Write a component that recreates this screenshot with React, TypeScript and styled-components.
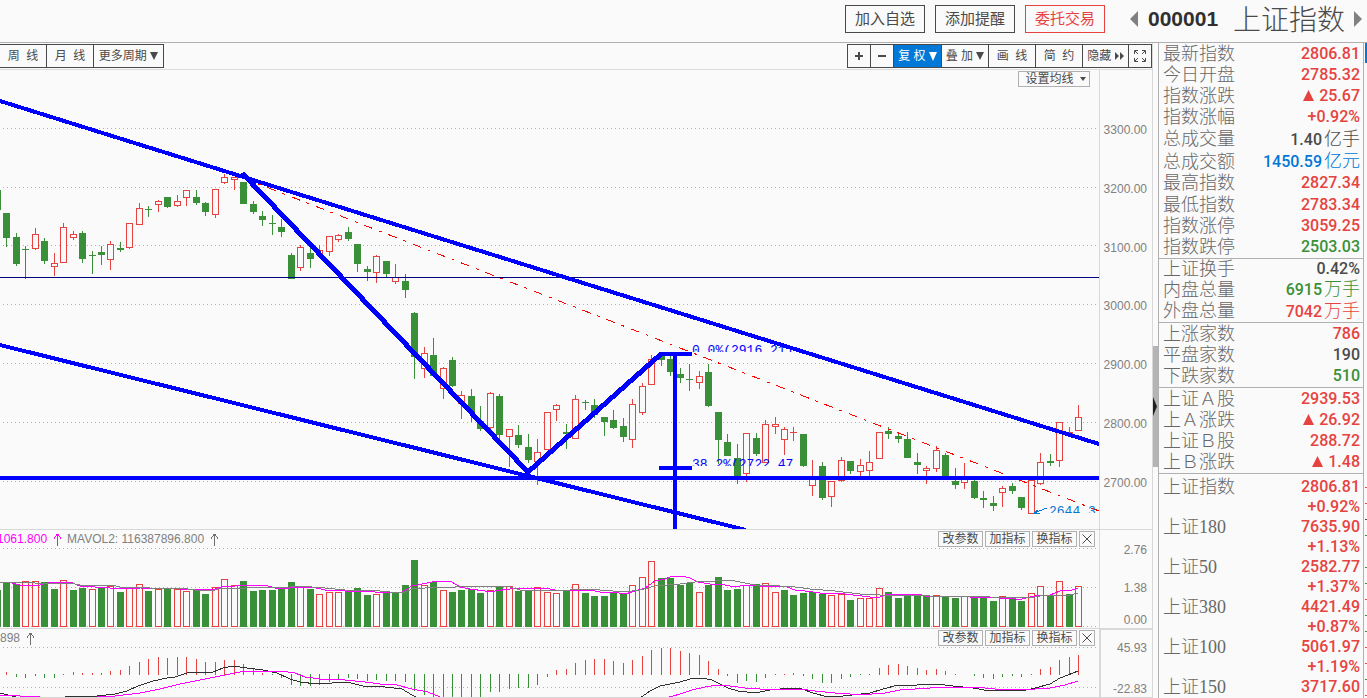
import React from "react";
import styled, { createGlobalStyle } from "styled-components";

const RED = "#e64340";
const GREEN = "#3a9038";
const BLUE = "#0000ff";
const BG = "#fafafa";
const DARK = "#4a4a4a";
const SKY = "#0078d7";
const CJK = '"Liberation Sans", "Noto Sans CJK SC", sans-serif';

const Global = createGlobalStyle`
  * { box-sizing: border-box; }
  body { margin: 0; background: ${BG}; color: ${DARK}; font-family: ${CJK}; font-size: 12px; overflow: hidden; }
  button { font-family: inherit; margin: 0; cursor: pointer; white-space: nowrap; }
`;

type Tone = "up" | "down" | "flat" | "info";
const toneColor: Record<Tone, string> = { up: RED, down: GREEN, flat: DARK, info: SKY };

/* kind, high, body top, body bottom, low */
type Candle = ["r" | "g", number, number, number, number];
const candles: Candle[] = [
  ["g", 190, 190, 210, 210], ["g", 213, 213, 238, 247], ["g", 233, 237, 264, 266], ["g", 246, 249, 250, 279],
  ["r", 228, 234, 249, 250], ["g", 238, 241, 261, 264], ["r", 253, 263, 267, 276], ["r", 223, 227, 263, 263],
  ["r", 231, 234, 238, 240], ["g", 231, 233, 259, 263], ["g", 251, 255, 256, 274], ["g", 246, 252, 255, 265],
  ["r", 241, 244, 260, 270], ["g", 242, 248, 250, 252], ["r", 223, 223, 248, 249], ["r", 203, 208, 225, 225],
  ["g", 206, 209, 210, 217], ["r", 200, 201, 205, 212], ["g", 197, 197, 207, 208], ["r", 195, 201, 206, 207],
  ["r", 190, 190, 198, 206], ["g", 190, 197, 203, 205], ["g", 202, 203, 212, 216], ["r", 189, 189, 215, 218],
  ["r", 174, 177, 183, 184], ["r", 177, 177, 180, 190], ["g", 182, 182, 204, 204], ["g", 201, 204, 212, 214],
  ["g", 211, 216, 220, 226], ["g", 215, 223, 224, 235], ["g", 219, 227, 232, 237], ["g", 253, 255, 279, 279],
  ["r", 245, 247, 268, 271], ["g", 247, 253, 259, 268], ["r", 245, 250, 255, 257], ["r", 236, 236, 252, 256],
  ["r", 234, 235, 240, 242], ["g", 227, 232, 239, 241], ["g", 244, 244, 264, 272], ["g", 266, 269, 272, 281],
  ["r", 255, 256, 273, 283], ["g", 261, 261, 274, 277], ["r", 264, 277, 282, 284], ["g", 274, 281, 290, 298],
  ["g", 312, 313, 357, 379], ["r", 347, 353, 369, 378], ["g", 338, 355, 376, 376], ["r", 367, 368, 389, 399],
  ["g", 357, 360, 386, 387], ["r", 391, 395, 404, 419], ["g", 389, 396, 413, 422], ["g", 406, 421, 429, 431],
  ["r", 392, 393, 428, 431], ["g", 394, 396, 435, 441], ["r", 429, 429, 437, 467], ["g", 425, 435, 445, 448],
  ["g", 434, 447, 460, 463], ["r", 439, 452, 462, 485], ["r", 412, 412, 450, 450], ["r", 404, 405, 410, 421],
  ["g", 424, 432, 434, 449], ["r", 395, 399, 439, 439], ["g", 400, 402, 403, 410], ["g", 399, 405, 415, 418],
  ["g", 417, 417, 422, 436], ["g", 410, 420, 428, 429], ["g", 418, 426, 437, 442], ["r", 399, 404, 440, 448],
  ["r", 383, 386, 413, 415], ["r", 355, 359, 385, 385], ["g", 354, 355, 360, 366], ["g", 355, 359, 372, 376],
  ["g", 368, 374, 378, 383], ["g", 364, 379, 380, 391], ["r", 371, 376, 383, 389], ["g", 364, 372, 406, 407],
  ["g", 412, 412, 440, 464], ["g", 434, 442, 456, 456], ["g", 444, 458, 476, 484], ["r", 433, 433, 474, 482],
  ["g", 433, 438, 454, 456], ["r", 420, 424, 463, 463], ["r", 417, 424, 427, 434], ["r", 427, 429, 440, 455],
  ["r", 427, 432, 433, 441], ["g", 434, 434, 466, 467], ["r", 460, 476, 486, 496], ["g", 462, 466, 498, 500],
  ["r", 481, 481, 497, 507], ["r", 457, 460, 481, 482], ["g", 461, 461, 471, 474], ["r", 459, 465, 472, 476],
  ["r", 451, 462, 471, 476], ["r", 432, 432, 459, 459], ["g", 427, 431, 434, 439], ["g", 433, 436, 439, 443],
  ["g", 432, 439, 458, 458], ["g", 453, 462, 465, 474], ["r", 466, 468, 471, 484], ["r", 446, 450, 469, 472],
  ["g", 453, 455, 477, 477], ["g", 468, 481, 485, 489], ["r", 463, 477, 483, 489], ["g", 480, 481, 498, 499],
  ["g", 491, 498, 500, 508], ["g", 496, 503, 506, 511], ["r", 486, 488, 493, 507], ["g", 483, 486, 491, 494],
  ["g", 497, 497, 508, 510], ["r", 480, 480, 514, 514], ["r", 453, 462, 484, 485], ["g", 454, 461, 463, 466],
  ["r", 422, 422, 461, 467], ["r", 427, 432, 435, 437], ["r", 405, 417, 431, 431],
];

const volumes =
  "g590 g583 g584 r581 r581 g582 g589 r580 g590 g588 r589 g588 r586 g592 r588 r584 g591 r589 g588 r589 r591 g590 g594 r587 r579 r585 g581 g591 g590 g590 g588 g582 r587 g589 r594 r592 r592 g590 g588 g595 r594 g592 g593 g585 g560 r585 g582 r590 g592 g590 g589 g593 r590 g587 r586 g591 g590 r587 r592 r593 g590 r584 g593 g596 g596 g593 g594 r585 r577 r561 g578 g578 g585 g583 r592 g585 g577 g590 g589 r585 g584 r583 r592 g590 g595 g593 g592 g594 r595 r594 g600 r598 r598 r588 g592 g598 g595 g595 g596 r595 g596 g598 r596 g596 g598 g601 r596 g598 g601 r593 r586 g595 r581 g594 r586"
    .split(" ")
    .map((v) => ({ up: v[0] === "r", top: Number(v.slice(1)) }));

/* end of each histogram stick; null where the bar is empty */
const sticks: (number | null)[] = [
  null, 672, 677, 678, 676, 678, 678, 674, 672, 673, 673, 673, 671, 670, 666, 662, 659, 657, 658, 657, 657, 659, 662,
  662, 660, 660, 664, 669, 673, 675, 678, 685, 686, 686, 685, 682, 679, 678, 679, 681, 680, 681, 681, 682, 691, 695,
  702, 706, 708, 706, 704, 700, 692, 692, 689, 688, 688, 685, 677, 670, 669, 663, 660, 659, 659, 661, 663, 660, 656,
  650, 648, 648, 651, 653, 655, 661, 669, 676, 683, 681, 682, 678, 675, 674, 673, 676, 679, 683, 683, 679, 677, 675,
  674, 668, 665, 664, 666, 668, 670, 669, 671, 674, null, 676, 678, 679, 677, 676, 677, 674, 669, 667, 660, 657, 655,
];

const left = (n: number) => Math.round(3.15 + 9.486 * (n - 1));

const volFast =
  "0,582 12,583 20,585 40,585 50,582 70,582 80,586 95,587 110,588 120,589 140,588 180,589 195,590 215,589 222,587 235,586 245,585 265,585 275,588 290,588 300,587 312,587 325,590 345,591 360,591 375,592 402,592 412,586 422,584 432,582 440,581 452,582 460,587 470,589 485,591 495,591 510,589 530,588 550,589 560,591 575,590 590,590 600,592 612,592 625,594 632,592 645,588 655,581 665,579 672,576 682,576 690,578 698,582 710,584 725,585 735,587 745,585 760,586 787,587 795,590 805,591 820,593 845,594 870,597 880,597 885,595 900,594 918,594 925,596 960,596 970,597 990,597 1000,598 1015,599 1022,599 1030,597 1040,595 1050,595 1060,591 1072,590 1078,588";
const volSlow =
  "0,582 35,583 70,583 80,585 112,585 120,587 150,588 180,588 195,590 215,590 220,588 245,588 290,587 300,586 312,587 325,588 345,590 370,590 380,591 390,592 405,592 412,589 425,588 455,587 470,586 500,586 510,587 520,590 570,590 580,589 600,590 625,592 640,590 655,586 680,584 695,582 715,581 730,580 745,583 755,585 780,586 795,587 810,589 835,591 860,594 880,595 920,595 930,596 975,596 990,597 1030,598 1040,596 1055,595 1070,595 1078,593";
const diff =
  "0,693 8,695 16,697 38,697 50,699 60,699 68,696 97,696 115,694 127,691 138,686 153,681 167,678 175,677 190,672 213,672 223,668 233,666 247,668 263,670 277,673 290,679 300,682 317,684 347,682 363,686 385,687 402,689 412,695 418,698 440,712 600,712 640,698 650,691 660,686 680,682 690,679 702,678 712,680 720,684 728,688 738,691 755,693 770,690 790,688 802,689 813,693 828,697 843,696 870,693 883,689 898,685 917,685 937,684 953,686 973,688 990,691 1007,690 1022,691 1035,688 1050,684 1060,678 1068,675 1078,671";
const dea =
  "0,695 20,696 40,697 97,697 115,696 140,693 160,689 180,684 200,680 220,676 240,672 260,671 280,671 295,673 305,677 320,679 345,680 365,682 380,684 397,685 412,689 428,692 435,695 443,698 470,710 640,710 666,698 680,694 692,690 705,687 718,685 730,686 745,688 760,689 800,689 815,691 835,693 850,694 872,694 885,693 900,690 930,688 950,687 975,687 995,689 1035,689 1050,688 1065,685 1078,681";

/* ---------- layout ---------- */

const Page = styled.div`
  height: 100vh;
  display: flex;
  flex-direction: column;
  overflow: hidden;
`;
const Header = styled.header`
  height: 43px;
  flex: none;
  display: flex;
  justify-content: flex-end;
  align-items: flex-start;
  gap: 10px;
  padding: 5px 4px 0 0;
  border-bottom: 1px solid #b0b0b0;
`;
const HeaderButton = styled.button<{ $alert?: boolean }>`
  width: 80px;
  height: 28px;
  padding: 0;
  font-size: 15px;
  line-height: 24px;
  background: transparent;
  color: ${(p) => (p.$alert ? RED : DARK)};
  border: 1px solid currentColor;
`;
const Symbol = styled.div`
  display: flex;
  align-items: center;
  height: 28px;
  width: 248px;
  padding-left: 15px;
`;
const Code = styled.strong`
  font-size: 21px;
  color: #303030;
  margin-left: 10px;
  width: 85px;
`;
const Name = styled.h1`
  margin: 0;
  padding-top: 4px;
  font-size: 28px;
  line-height: 28px;
  font-weight: 300;
  width: 121px;
`;
const StepButton = styled.button`
  border: 0;
  padding: 0;
  background: none;
  display: flex;
`;
const Body = styled.div`
  flex: 1;
  min-height: 0;
  display: flex;
`;
const Charts = styled.main`
  flex: 1;
  min-width: 0;
  display: flex;
  flex-direction: column;
  border-right: 1px solid #d8d8d8;
`;
const Toolbar = styled.div`
  flex: none;
  display: flex;
  justify-content: space-between;
  height: 27px;
  padding-top: 1px;
  border-bottom: 1px solid #dcdcdc;
`;
const Group = styled.div`
  display: flex;
`;
const ToolButton = styled.button<{ $w: number; $on?: boolean; $first?: boolean }>`
  display: flex;
  align-items: center;
  justify-content: center;
  width: ${(p) => p.$w}px;
  height: 24px;
  padding: 0;
  font-size: 12px;
  line-height: 22px;
  white-space: pre;
  color: ${(p) => (p.$on ? "#fff" : DARK)};
  background: ${(p) => (p.$on ? SKY : "transparent")};
  border: 1px solid ${DARK};
  border-left-width: ${(p) => (p.$first ? 0 : 1)}px;
  & + & { margin-left: -1px; }
`;
const Panel = styled.section<{ $h?: number }>`
  flex: ${(p) => (p.$h ? `0 0 ${p.$h}px` : "1 1 0")};
  min-height: 0;
  display: flex;
  border-bottom: 1px solid #d8d8d8;
`;
const Plot = styled.div`
  position: relative;
  flex: 1;
  min-width: 0;
  overflow: hidden;
`;
const Drawing = styled.svg`
  display: block;
  position: absolute;
  inset: 0;
  width: 100%;
  height: 100%;
`;
const Axis = styled.div<{ $pad: string }>`
  width: 53px;
  flex: none;
  display: flex;
  flex-direction: column;
  justify-content: space-between;
  padding: ${(p) => p.$pad};
  border-left: 1px solid #d8d8d8;
  color: #808080;
  font-size: 12px;
  line-height: 16px;
  text-align: right;
`;
const VolumeAxis = styled(Axis)`
  span:nth-child(2) { margin-top: 6px; }
`;
const BoxedAxis = styled(Axis)`
  border-left-width: 2px;
  border-top: 1px solid #d8d8d8;
`;
const Legend = styled.div`
  position: absolute;
  top: 1px;
  left: 0;
  display: flex;
  align-items: center;
  height: 16px;
  color: #808080;
  white-space: pre;
`;
const Cut = styled.span`
  color: #f0f;
  margin-left: -3px;
`;
const Rise = styled.svg`
  margin: 0 6px;
`;
const PanelTools = styled.div`
  position: absolute;
  top: 1px;
  right: 4px;
  display: flex;
  gap: 2px;
`;
const SmallButton = styled.button<{ $w: number }>`
  display: flex;
  align-items: center;
  justify-content: center;
  width: ${(p) => p.$w}px;
  height: 16px;
  padding: 0;
  font-size: 12px;
  line-height: 14px;
  color: ${DARK};
  background: ${BG};
  border: 1px solid #b0b0b0;
`;
const AverageButton = styled(SmallButton)`
  position: absolute;
  top: 1px;
  right: 9px;
  gap: 6px;
  padding-left: 3px;
`;
const Mark = styled.span<{ $x: number; $y: number; $w: number; $color: string }>`
  position: absolute;
  left: ${(p) => (p.$x / 1099) * 100}%;
  top: ${(p) => ((p.$y - 70) / 459) * 100}%;
  width: ${(p) => p.$w}px;
  height: 8px;
  overflow: hidden;
  font: 13px/14px "Liberation Mono", monospace;
  white-space: nowrap;
  color: ${(p) => p.$color};
`;
const Splitter = styled.div`
  width: 5px;
  flex: none;
  padding-top: 303px;
`;
const Thumb = styled.div`
  height: 121px;
  background: #b4b4b4;
  padding-top: 51px;
`;
const Quotes = styled.aside`
  width: 206px;
  flex: none;
  border-left: 1px solid #b0b0b0;
  border-right: 1px solid #b0b0b0;
  overflow: hidden;
`;
const Sheet = styled.table<{ $h: number }>`
  width: 100%;
  height: ${(p) => p.$h}px;
  border-collapse: separate;
  border-spacing: 0;
  border-bottom: 1px solid #b0b0b0;
`;
const Label = styled.th`
  padding: 0 0 0 4px;
  text-align: left;
  font: 300 18px/20px "Liberation Serif", "Noto Sans CJK SC", serif;
  color: #686868;
  white-space: nowrap;
`;
const Value = styled.td<{ $tone: Tone }>`
  padding: 0 3px 0 0;
  text-align: right;
  font: 500 16px/20px Roboto, "Noto Sans CJK SC", sans-serif;
  color: ${(p) => toneColor[p.$tone]};
  white-space: nowrap;
`;
const Unit = styled.span`
  margin-left: 2px;
  font: 300 18px/16px "Noto Sans CJK SC", sans-serif;
`;
const Triangle = styled.svg`
  margin-right: 5px;
`;
const IndexSheet = styled.table`
  width: 100%;
  margin-top: 3px;
  border-spacing: 0;
  border-collapse: separate;
`;
const Strip = styled.div`
  width: 3px;
  flex: none;
  padding-left: 1px;
  overflow: hidden;
`;
const StripHead = styled.div`
  height: 20px;
  margin-bottom: 410px;
  background: ${SKY};
`;

/* ---------- pieces ---------- */

const Grid = ({ ys }: { ys: number[] }) => (
  <g stroke="#b0b0b0" strokeDasharray="1 3">
    {ys.map((y) => (
      <path key={y} d={`M3 ${y + 0.5}H1096`} />
    ))}
  </g>
);

function HollowBar({ x, top, bottom }: { x: number; top: number; bottom: number }) {
  return bottom - top < 2 ? (
    <rect x={x} y={top} width={7} height={1} fill={RED} />
  ) : (
    <rect x={x + 0.5} y={top + 0.5} width={6} height={bottom - top - 1} fill={BG} stroke={RED} />
  );
}

function CandleBar({ n, c }: { n: number; c: Candle }) {
  const [kind, high, top, bottom, low] = c;
  const x = left(n);
  return (
    <g>
      <rect x={x + 3} y={high} width={1} height={low - high} fill={kind === "r" ? RED : GREEN} />
      {kind === "r" ? (
        <HollowBar x={x} top={top} bottom={bottom} />
      ) : (
        <rect x={x} y={top} width={7} height={bottom - top} fill={GREEN} />
      )}
    </g>
  );
}

const RiseArrow = ({ color }: { color: string }) => (
  <Rise width="8" height="13" viewBox="0 0 8 13" fill="none" stroke={color} shapeRendering="crispEdges" aria-hidden>
    <path d="M4.5 1V13M4.5 1L1 5.500M4.500 1L8 5.500" />
  </Rise>
);

const Down = ({ w, h, fill = DARK }: { w: number; h: number; fill?: string }) => (
  <svg width={w} height={h} viewBox="0 0 8 8" preserveAspectRatio="none" aria-hidden>
    <path d="M0 0H8L4 8Z" fill={fill} />
  </svg>
);

const IndicatorTools = () => (
  <PanelTools>
    <SmallButton $w={45}>改参数</SmallButton>
    <SmallButton $w={45}>加指标</SmallButton>
    <SmallButton $w={45}>换指标</SmallButton>
    <SmallButton $w={16} aria-label="关闭">
      <svg width="10" height="10" viewBox="0 0 10 10" stroke={DARK}>
        <path d="M.5 .5L9.500 9.500M9.500 .5L.5 9.500" />
      </svg>
    </SmallButton>
  </PanelTools>
);

interface Quote {
  label: string;
  value: string;
  tone: Tone;
  unit?: string;
  rise?: boolean;
}
const q = (label: string, value: string, tone: Tone, unit?: string, rise?: boolean): Quote => ({ label, value, tone, unit, rise });

const sections: { height: number; rows: Quote[] }[] = [
  {
    height: 216,
    rows: [
      q("最新指数", "2806.81", "up"),
      q("今日开盘", "2785.32", "up"),
      q("指数涨跌", "25.67", "up", undefined, true),
      q("指数涨幅", "+0.92%", "up"),
      q("总成交量", "1.40", "flat", "亿手"),
      q("总成交额", "1450.59", "info", "亿元"),
      q("最高指数", "2827.34", "up"),
      q("最低指数", "2783.34", "up"),
      q("指数涨停", "3059.25", "up"),
      q("指数跌停", "2503.03", "down"),
    ],
  },
  { height: 64, rows: [q("上证换手", "0.42%", "flat"), q("内盘总量", "6915", "down", "万手"), q("外盘总量", "7042", "up", "万手")] },
  { height: 65, rows: [q("上涨家数", "786", "up"), q("平盘家数", "190", "flat"), q("下跌家数", "510", "down")] },
  {
    height: 86,
    rows: [
      q("上证Ａ股", "2939.53", "up"),
      q("上Ａ涨跌", "26.92", "up", undefined, true),
      q("上证Ｂ股", "288.72", "up"),
      q("上Ｂ涨跌", "1.48", "up", undefined, true),
    ],
  },
];

const indices = [
  ["上证指数", "2806.81", "+0.92%"],
  ["上证180", "7635.90", "+1.13%"],
  ["上证50", "2582.77", "+1.37%"],
  ["上证380", "4421.49", "+0.87%"],
  ["上证100", "5061.97", "+1.19%"],
  ["上证150", "3717.60", ""],
];

const ticks = [RED, RED, DARK, GREEN, BG, GREEN, GREEN, RED, GREEN, GREEN, RED, RED, GREEN, RED];

export default function App() {
  return (
    <Page>
      <Global />
      <Header>
        <HeaderButton>加入自选</HeaderButton>
        <HeaderButton>添加提醒</HeaderButton>
        <HeaderButton $alert>委托交易</HeaderButton>
        <Symbol>
          <StepButton aria-label="上一个">
            <svg width="8" height="16" viewBox="0 0 8 16"><path d="M8 0V16L0 8Z" fill="#808080" /></svg>
          </StepButton>
          <Code>000001</Code>
          <Name>上证指数</Name>
          <StepButton aria-label="下一个">
            <svg width="8" height="16" viewBox="0 0 8 16"><path d="M0 0V16L8 8Z" fill="#808080" /></svg>
          </StepButton>
        </Symbol>
      </Header>
      <Body>
        <Charts>
          <Toolbar>
            <Group>
              <ToolButton $w={47} $first>周  线</ToolButton>
              <ToolButton $w={48}>月  线</ToolButton>
              <ToolButton $w={71}>更多周期 <Down w={8} h={8} /></ToolButton>
            </Group>
            <Group>
              <ToolButton $w={24} aria-label="放大">
                <svg width="8" height="8" viewBox="0 0 8 8"><path d="M3 0H5V3H8V5H5V8H3V5H0V3H3Z" fill={DARK} /></svg>
              </ToolButton>
              <ToolButton $w={24} aria-label="缩小">
                <svg width="8" height="8" viewBox="0 0 8 8"><path d="M0 3H8V5H0Z" fill={DARK} /></svg>
              </ToolButton>
              <ToolButton $w={49} $on>复 权 <Down w={8} h={9} fill="#fff" /></ToolButton>
              <ToolButton $w={48}>叠 加 <Down w={8} h={8} /></ToolButton>
              <ToolButton $w={48}>画  线</ToolButton>
              <ToolButton $w={48}>简  约</ToolButton>
              <ToolButton $w={47}>
                隐藏{" "}
                <svg width="9" height="8" viewBox="0 0 9 8"><path d="M0 0L4 4L0 8ZM5 0L9 4L5 8Z" fill={DARK} /></svg>
              </ToolButton>
              <ToolButton $w={24} aria-label="全屏">
                <svg width="12" height="12" viewBox="0 0 12 12" fill="none" stroke={DARK}>
                  <path d="M.5 4V.5H4M8 .5H11.500V4M.5 8V11.500H4M8 11.500H11.500V8M1 1L4 4M11 1L8 4M1 11L4 8M11 11L8 8" />
                </svg>
              </ToolButton>
            </Group>
          </Toolbar>

          <Panel>
            <Plot>
              <Drawing viewBox="0 70 1099 459" preserveAspectRatio="none" shapeRendering="crispEdges">
                <Grid ys={[128, 187, 245, 304, 363, 422, 481]} />
                {candles.map((c, n) => (
                  <CandleBar key={n} n={n} c={c} />
                ))}
                <path d="M0 277.500H1099" stroke="#000080" />
                <path d="M243 178L1099 511" stroke="#f00" strokeDasharray="9 7 3 7" />
                <g stroke={BLUE} strokeWidth="4" fill="none">
                  <path d="M0 101L1099 444" />
                  <path d="M0 345L746 530" />
                  <path d="M0 478H1099" />
                  <path d="M242 173L528 472L661 354" strokeWidth="5" />
                  <path d="M659 354H692" />
                  <path d="M675 354V529M659 468H692" />
                </g>
                <path d="M1034 513L1047 508M1034 513H1040M1034 513L1038 510" stroke={SKY} />
              </Drawing>
              <Mark $x={692} $y={344} $w={104} $color={BLUE}>0.0%(2916.21)</Mark>
              <Mark $x={692} $y={458} $w={101} $color={BLUE}>38.2%(2722.47</Mark>
              <Mark $x={1049} $y={505} $w={50} $color={SKY}>2644.3</Mark>
              <AverageButton $w={72}>设置均线 <Down w={6} h={4} /></AverageButton>
            </Plot>
            <Axis $pad="52px 5px 38px 0">
              {["3300.00", "3200.00", "3100.00", "3000.00", "2900.00", "2800.00", "2700.00"].map((t) => (
                <span key={t}>{t}</span>
              ))}
            </Axis>
          </Panel>

          <Panel $h={99}>
            <Plot>
              <Drawing viewBox="0 530 1099 98" preserveAspectRatio="none" shapeRendering="crispEdges">
                <Grid ys={[548, 587, 626]} />
                {volumes.map((v, n) =>
                  v.up ? (
                    <HollowBar key={n} x={left(n)} top={v.top} bottom={627} />
                  ) : (
                    <rect key={n} x={left(n)} y={v.top} width={7} height={627 - v.top} fill={GREEN} />
                  )
                )}
                <polyline points={volFast} fill="none" stroke="#f0f" />
                <polyline points={volSlow} fill="none" stroke="#808080" />
              </Drawing>
              <Legend>
                <Cut>1061.800</Cut>
                <RiseArrow color="#f0f" />
                <span>MAVOL2: 116387896.800</span>
                <RiseArrow color="#707070" />
              </Legend>
              <IndicatorTools />
            </Plot>
            <VolumeAxis $pad="12px 5px 0 0">
              <span>2.76</span>
              <span>1.38</span>
              <span>0.00</span>
            </VolumeAxis>
          </Panel>

          <Panel $h={69}>
            <Plot>
              <Drawing viewBox="0 629 1099 68" preserveAspectRatio="none" shapeRendering="crispEdges">
                <Grid ys={[647, 687]} />
                {sticks.map((y, n) =>
                  y === null ? null : y < 675 ? (
                    <rect key={n} x={left(n) + 3} y={y} width={1} height={675 - y} fill={RED} />
                  ) : (
                    <rect key={n} x={left(n) + 3} y={674} width={1} height={y - 674} fill={GREEN} />
                  )
                )}
                <polyline points={diff} fill="none" stroke="#303030" />
                <polyline points={dea} fill="none" stroke="#f0f" />
              </Drawing>
              <Legend>
                <span>898</span>
                <RiseArrow color="#707070" />
              </Legend>
              <IndicatorTools />
            </Plot>
            <BoxedAxis $pad="10px 5px 0 0">
              <span>45.93</span>
              <span>-22.83</span>
            </BoxedAxis>
          </Panel>
        </Charts>

        <Splitter>
          <Thumb>
            <svg width="4" height="19" viewBox="0 0 4 19" display="block"><path d="M0 0L4 9.500L0 19Z" fill="#202020" /></svg>
          </Thumb>
        </Splitter>

        <Quotes>
          {sections.map((s) => (
            <Sheet key={s.height} $h={s.height}>
              <tbody>
                {s.rows.map((r) => (
                  <tr key={r.label}>
                    <Label scope="row">{r.label}</Label>
                    <Value $tone={r.tone}>
                      {r.rise && (
                        <Triangle width="11" height="11" viewBox="0 0 11 11" aria-hidden>
                          <path d="M5.500 0L11 11H0Z" fill={RED} />
                        </Triangle>
                      )}
                      {r.value}
                      {r.unit && <Unit>{r.unit}</Unit>}
                    </Value>
                  </tr>
                ))}
              </tbody>
            </Sheet>
          ))}
          <IndexSheet>
            <tbody>
              {indices.map(([label, value, change]) => (
                <React.Fragment key={label}>
                  <tr>
                    <Label scope="row">{label}</Label>
                    <Value $tone="up">{value}</Value>
                  </tr>
                  {change && (
                    <tr>
                      <td />
                      <Value $tone="up">{change}</Value>
                    </tr>
                  )}
                </React.Fragment>
              ))}
            </tbody>
          </IndexSheet>
        </Quotes>
        <Strip>
          <StripHead />
          <svg width="2" height="240" viewBox="0 0 2 240" display="block">
            {ticks.map((c, n) => (
              <rect key={n} x="0" y={14 + n * 16} width="2" height="1" fill={c} />
            ))}
          </svg>
        </Strip>
      </Body>
    </Page>
  );
}
